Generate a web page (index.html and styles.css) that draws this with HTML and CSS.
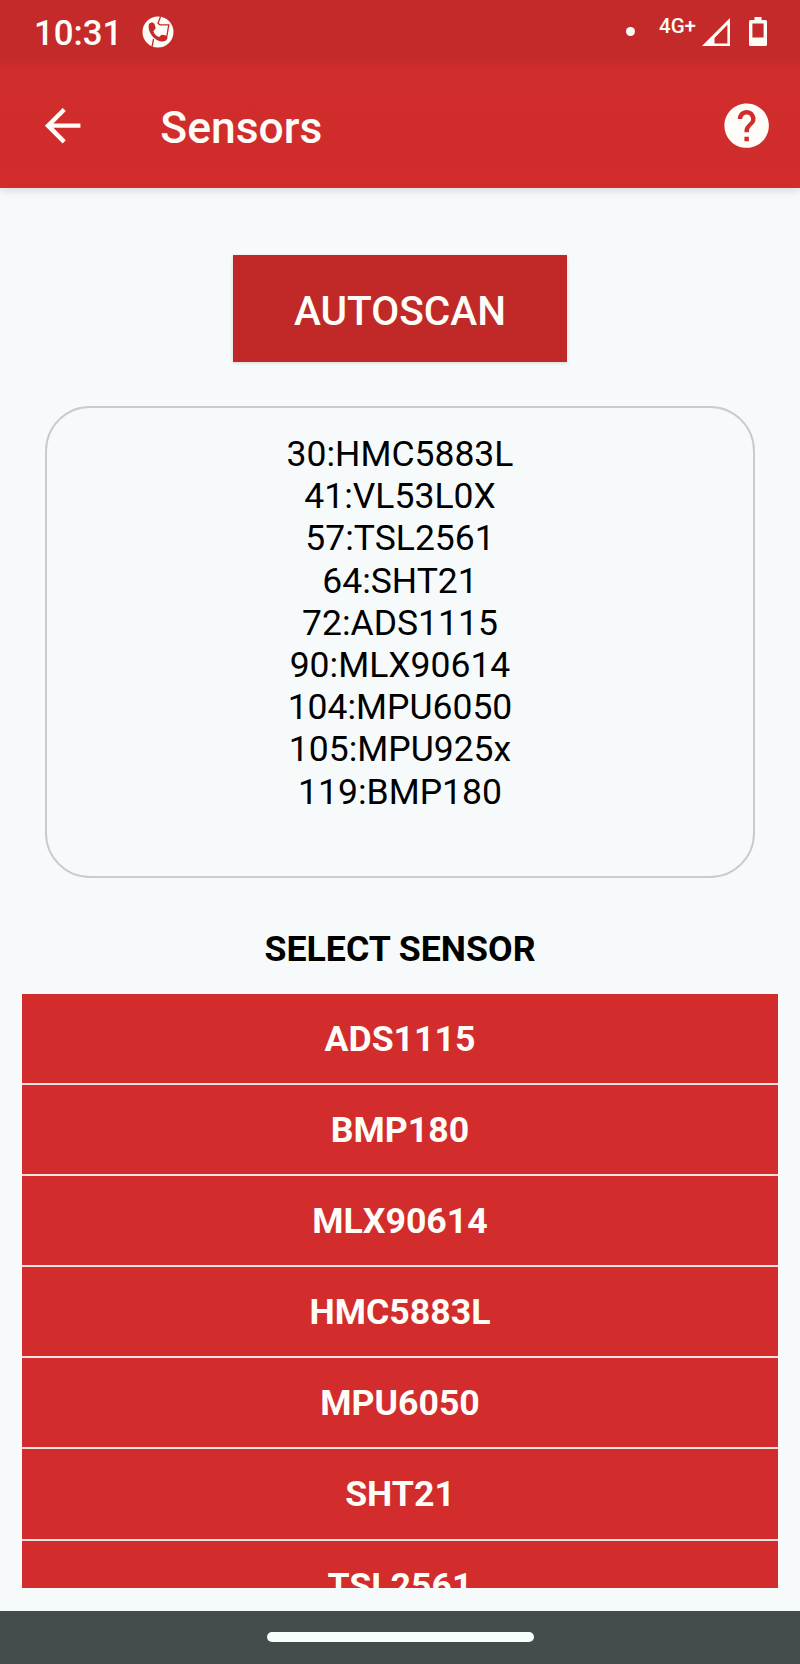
FILE: index.html
```
<!DOCTYPE html>
<html lang="en">
<head>
  <meta charset="utf-8">
  <title>Sensors</title>
  <link rel="stylesheet" href="styles.css">
</head>
<body>
  <div class="screen">
    <header class="header">
      <div class="status-bar">
        <span class="clock">10:31</span>
        <svg class="call-icon" viewBox="0 0 32 32">
          <circle cx="16" cy="16" r="15.5" fill="#fffdf8"/>
          <path d="M18.6 0.5L16 7.2L18 8.8H26.8L24.8 20.5M10 31L11.6 23" fill="none" stroke="#c42a29" stroke-width="1.3"/>
          <path d="M6.8 8.4C8.4 5.8 11.6 6 12.5 8L13.6 11.6C13.8 13.6 11.6 14.2 11.4 15.2C12.1 17.8 14.6 20.4 17.2 20.9C18.4 20.2 18.8 18.7 20.4 18.7L24.2 19.6C26.2 20.6 25.8 23.4 23.6 24.8C17 28 5.2 18.8 6.8 8.4Z" fill="#c42a29"/>
        </svg>
        <div class="status-right">
          <span class="dot"></span>
          <span class="network">4G+</span>
          <svg class="signal-icon" viewBox="0 0 28 28">
            <path fill="#fffdf8" fill-rule="evenodd" d="M0 28L28 0V28ZM12.5 20V25.4H25.4V6.8Z"/>
          </svg>
          <svg class="battery-icon" viewBox="0 0 18 29">
            <path fill="#fffdf8" fill-rule="evenodd" d="M5.5 0H12.5V3H16.5Q18 3 18 4.5V27.5Q18 29 16.5 29H1.5Q0 29 0 27.5V4.5Q0 3 1.5 3H5.5ZM3.4 6.4V20.4H14.6V6.4Z"/>
          </svg>
        </div>
      </div>
      <div class="app-bar">
        <svg class="icon" viewBox="0 0 24 24">
          <path fill="#fffdf8" d="M20 11H7.83l5.59-5.59L12 4l-8 8 8 8 1.41-1.41L7.83 13H20v-2z"/>
        </svg>
        <h1 class="title">Sensors</h1>
        <svg class="icon" viewBox="0 0 24 24">
          <path fill="#fffdf8" d="M12 2C6.48 2 2 6.48 2 12s4.48 10 10 10 10-4.48 10-10S17.52 2 12 2zm1 17h-2v-2h2v2zm2.07-7.75l-.9.92C13.45 12.9 13 13.5 13 15h-2v-.5c0-1.1.45-2.1 1.17-2.83l1.24-1.26c.37-.36.59-.86.59-1.41 0-1.1-.9-2-2-2s-2 .9-2 2H8c0-2.21 1.79-4 4-4s4 1.79 4 4c0 .88-.36 1.68-.93 2.25z"/>
        </svg>
      </div>
    </header>

    <main class="content">
      <button class="autoscan">AUTOSCAN</button>

      <ul class="scan-results">
        <li>30:HMC5883L</li>
        <li>41:VL53L0X</li>
        <li>57:TSL2561</li>
        <li>64:SHT21</li>
        <li>72:ADS1115</li>
        <li>90:MLX90614</li>
        <li>104:MPU6050</li>
        <li>105:MPU925x</li>
        <li>119:BMP180</li>
      </ul>

      <h2 class="select-title">SELECT SENSOR</h2>

      <ul class="sensor-list">
        <li>ADS1115</li>
        <li>BMP180</li>
        <li>MLX90614</li>
        <li>HMC5883L</li>
        <li>MPU6050</li>
        <li>SHT21</li>
        <li>TSL2561</li>
      </ul>
    </main>

    <nav class="nav-bar"><span class="nav-pill"></span></nav>
  </div>
</body>
</html>
```
FILE: styles.css
```
* {
  margin: 0;
  padding: 0;
  box-sizing: border-box;
}

body {
  font-family: Roboto, "Liberation Sans", sans-serif;
  background: #f6fafa;
}

ul {
  list-style: none;
}

.screen {
  display: flex;
  flex-direction: column;
  width: 800px;
  height: 1664px;
  overflow: hidden;
}

/* Header */
.header {
  height: 188px;
  color: #fffdf8;
  background: linear-gradient(#c42a29 58px, #d02d2d 70px, #d22c2c);
  box-shadow: 0 2px 9px rgba(0, 0, 0, 0.15);
}

.status-bar {
  display: flex;
  align-items: center;
  height: 63px;
  padding: 0 33px 0 34px;
}

.clock {
  width: 108px;
  font-size: 34.8px;
  font-weight: 500;
  line-height: 63px;
  padding-top: 3px;
}

.call-icon {
  width: 32px;
  height: 32px;
}

.status-right {
  display: flex;
  align-items: center;
  margin-left: auto;
}

.dot {
  width: 9px;
  height: 9px;
  border-radius: 50%;
  background: #fffdf8;
  margin-right: 24px;
}

.network {
  width: 43px;
  font-size: 20.5px;
  font-weight: 500;
  line-height: 24px;
  padding-bottom: 12px;
}

.signal-icon {
  width: 28px;
  height: 28px;
  margin-right: 19px;
}

.battery-icon {
  width: 18px;
  height: 29px;
}

.app-bar {
  display: flex;
  align-items: center;
  height: 126px;
  padding: 0 27px 0 36px;
}

.icon {
  width: 53.3px;
  height: 53.3px;
}

.title {
  flex: 1;
  margin-left: 71px;
  font-size: 44.4px;
  font-weight: 500;
  line-height: 52px;
  padding-top: 3px;
}

/* Content */
.content {
  flex: 1;
  display: flex;
  flex-direction: column;
  min-height: 0;
  padding: 67px 22px 23px;
}

.autoscan {
  align-self: center;
  width: 334px;
  height: 107px;
  border: none;
  color: #fffdf8;
  background: #c12929;
  box-shadow: 0 1px 3px rgba(0, 0, 0, 0.15);
  font-family: inherit;
  font-size: 40.6px;
  font-weight: 500;
  padding-top: 5px;
}

.scan-results {
  height: 472px;
  margin: 44px 23px 0;
  padding: 25px 0;
  border: 2px solid #cacccb;
  border-radius: 45px;
  background: #f6fafb;
  color: #000;
  font-size: 35.5px;
  line-height: 42.2px;
  text-align: center;
}

.select-title {
  margin: 50px 0 23px;
  color: #000;
  font-size: 35.7px;
  font-weight: 700;
  line-height: 43px;
  text-align: center;
}

.sensor-list {
  flex: 1;
  min-height: 0;
  overflow: hidden;
  background: #d22c2d;
  color: #fffdf8;
  font-size: 35.7px;
  font-weight: 700;
  text-align: center;
}

.sensor-list li {
  height: 91.1px;
  line-height: 91px;
  border-bottom: 2.2px solid #ebe4df;
}

/* Bottom navigation */
.nav-bar {
  display: flex;
  justify-content: center;
  height: 53px;
  padding-top: 21px;
  background: #444d4c;
}

.nav-pill {
  width: 267px;
  height: 10px;
  border-radius: 5px;
  background: #f7fffc;
}
```
